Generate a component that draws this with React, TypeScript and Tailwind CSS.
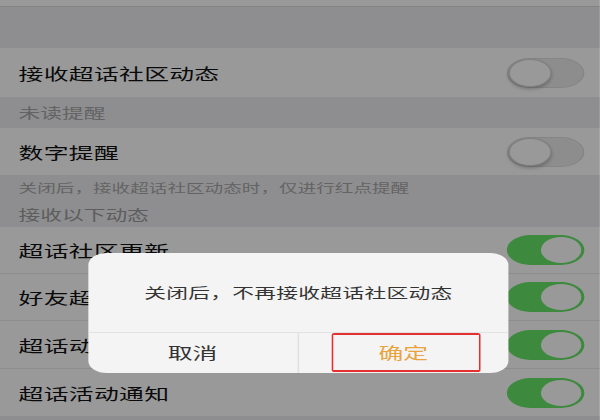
import React from "react";

function Toggle({ on }: { on: boolean }) {
    if (on) {
        return (
            <div className="flex h-[30px] w-[50px] items-center justify-end rounded-full bg-[#66e66a] p-[2px]">
                <div className="h-[26px] w-[26px] rounded-full bg-white" />
            </div>
        );
    }

    return (
        <div className="flex h-[30px] w-[50px] items-center rounded-full border border-[#dedede] bg-[#ececec]">
            <div className="h-[28px] w-[28px] rounded-full border border-[#d6d6d6] bg-white shadow-[0_2px_3px_rgba(0,0,0,0.25)]" />
        </div>
    );
}

function Row({ label, on, h }: { label: string; on: boolean; h: string }) {
    return (
        <div className={`flex items-center justify-between bg-white pl-3 pr-[10px] ${h}`}>
            <span className="text-[16px] tracking-[0.2px] text-[#111]">{label}</span>
            <Toggle on={on} />
        </div>
    );
}

export default function App() {
    return (
        <div className="h-[420px] w-[600px] overflow-hidden bg-[#ededf0] font-['Noto_Sans_CJK_SC','Noto_Sans',sans-serif]">
            <div className="relative h-[420px] w-[387px] origin-top-left scale-x-[1.55]">

                <div className="h-[7px] border-b border-[#dcdcdc] bg-white" />
                <div className="h-[41px]" />

                <Row label="接收超话社区动态" on={false} h="h-[49px]" />

                <div className="flex h-[31px] items-center px-3 text-[14px] text-[#a6a6a6]">
                    未读提醒
                </div>

                <Row label="数字提醒" on={false} h="h-[47px]" />

                <div className="flex h-[52px] flex-col justify-center px-3 text-[#a6a6a6]">
                    <p className="text-[12px] leading-[20px]">
                        关闭后，接收超话社区动态时，仅进行红点提醒
                    </p>
                    <p className="mt-[6px] text-[14px] leading-[20px] text-[#9c9c9c]">
                        接收以下动态
                    </p>
                </div>

                <div className="divide-y divide-[#ececec] bg-white">
                    <Row label="超话社区更新" on={true} h="h-[47px]" />
                    <Row label="好友超话动态" on={true} h="h-[47px]" />
                    <Row label="超话动态提醒" on={true} h="h-[48px]" />
                    <Row label="超话活动通知" on={true} h="h-[47px]" />
                </div>

                {/* dim layer */}
                <div className="absolute inset-0 bg-black/40" />

                {/* dialog */}
                <div className="absolute left-[57px] top-[253px] w-[271px] overflow-hidden rounded-[12px] bg-[#f4f4f4]">
                    <div className="flex h-[79px] items-center justify-center text-[14px] tracking-[0.2px] text-[#333]">
                        关闭后，不再接收超话社区动态
                    </div>
                    <div className="grid h-[41px] grid-cols-2 border-t border-[#e2e2e2]">
                        <div className="flex items-center justify-center border-r border-[#e2e2e2] pb-[2px] text-[16px] text-[#333]">
                            取消
                        </div>
                        <div className="relative flex items-center justify-center pb-[2px] text-[16px] text-[#e9a441]">
                            <div className="absolute bottom-[1px] left-[21px] right-[18px] top-0 rounded-[2px] border-x-[1.7px] border-y-[2.5px] border-[#e53030]" />
                            确定
                        </div>
                    </div>
                </div>

            </div>
        </div>
    );
}
